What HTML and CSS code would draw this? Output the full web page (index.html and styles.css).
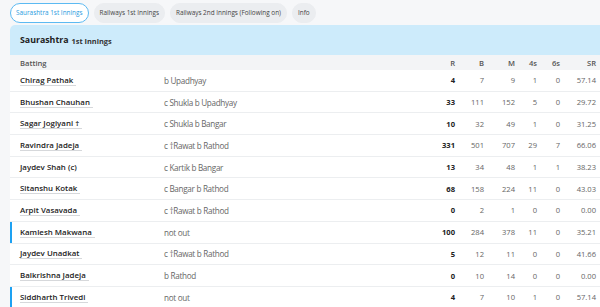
FILE: index.html
```html
<!DOCTYPE html>
<html>
<head>
<meta charset="utf-8">
<link rel="stylesheet" href="styles.css">
</head>
<body>
<div class="page">
  <nav class="tabs">
    <span class="tab active">Saurashtra 1st Innings</span>
    <span class="tab">Railways 1st Innings</span>
    <span class="tab">Railways 2nd Innings (Following on)</span>
    <span class="tab">Info</span>
  </nav>
  <section class="card">
    <header class="card-head"><span class="team">Saurashtra</span> <span class="inn">1st Innings</span></header>
    <div class="row head-row">
      <span>Batting</span><span></span><span class="num">R</span><span class="num">B</span><span class="num">M</span><span class="num">4s</span><span class="num">6s</span><span class="num">SR</span>
    </div>
    <div class="row"><span class="name"><a>Chirag Pathak</a></span><span class="dis">b Upadhyay</span><span class="num runs">4</span><span class="num">7</span><span class="num">9</span><span class="num">1</span><span class="num">0</span><span class="num">57.14</span></div>
    <div class="row"><span class="name"><a>Bhushan Chauhan</a></span><span class="dis">c Shukla b Upadhyay</span><span class="num runs">33</span><span class="num">111</span><span class="num">152</span><span class="num">5</span><span class="num">0</span><span class="num">29.72</span></div>
    <div class="row"><span class="name"><a>Sagar Jogiyani †</a></span><span class="dis">c Shukla b Bangar</span><span class="num runs">10</span><span class="num">32</span><span class="num">49</span><span class="num">1</span><span class="num">0</span><span class="num">31.25</span></div>
    <div class="row"><span class="name"><a>Ravindra Jadeja</a></span><span class="dis">c †Rawat b Rathod</span><span class="num runs">331</span><span class="num">501</span><span class="num">707</span><span class="num">29</span><span class="num">7</span><span class="num">66.06</span></div>
    <div class="row"><span class="name"><a class="plain">Jaydev Shah (c)</a></span><span class="dis">c Kartik b Bangar</span><span class="num runs">13</span><span class="num">34</span><span class="num">48</span><span class="num">1</span><span class="num">1</span><span class="num">38.23</span></div>
    <div class="row"><span class="name"><a>Sitanshu Kotak</a></span><span class="dis">c Bangar b Rathod</span><span class="num runs">68</span><span class="num">158</span><span class="num">224</span><span class="num">11</span><span class="num">0</span><span class="num">43.03</span></div>
    <div class="row"><span class="name"><a>Arpit Vasavada</a></span><span class="dis">c †Rawat b Rathod</span><span class="num runs">0</span><span class="num">2</span><span class="num">1</span><span class="num">0</span><span class="num">0</span><span class="num">0.00</span></div>
    <div class="row notout"><span class="name"><a>Kamlesh Makwana</a></span><span class="dis">not out</span><span class="num runs">100</span><span class="num">284</span><span class="num">378</span><span class="num">11</span><span class="num">0</span><span class="num">35.21</span></div>
    <div class="row"><span class="name"><a>Jaydev Unadkat</a></span><span class="dis">c †Rawat b Rathod</span><span class="num runs">5</span><span class="num">12</span><span class="num">11</span><span class="num">0</span><span class="num">0</span><span class="num">41.66</span></div>
    <div class="row"><span class="name"><a>Balkrishna Jadeja</a></span><span class="dis">b Rathod</span><span class="num runs">0</span><span class="num">10</span><span class="num">14</span><span class="num">0</span><span class="num">0</span><span class="num">0.00</span></div>
    <div class="row notout"><span class="name"><a>Siddharth Trivedi</a></span><span class="dis">not out</span><span class="num runs">4</span><span class="num">7</span><span class="num">10</span><span class="num">1</span><span class="num">0</span><span class="num">57.14</span></div>
  </section>
</div>
</body>
</html>
```

FILE: styles.css
```css
html, body {
  margin: 0;
  padding: 0;
  background: #f6f7f9;
  overflow: hidden;
}
body {
  font-family: "Open Sans", "DejaVu Sans", sans-serif;
  color: #222;
}
.page {
  padding: 3px 0 0 10px;
  width: 610px;
}
.tabs {
  display: flex;
  gap: 5px;
  height: 20px;
  align-items: center;
}
.tab {
  font-size: 6.4px;
  line-height: 18px;
  height: 18px;
  padding: 0 5px;
  border-radius: 10px;
  background: #ebedf0;
  color: #444;
  border: 1px solid #ebedf0;
  white-space: nowrap;
}
.tab.active {
  background: #fff;
  color: #2a9be0;
  border-color: #5cbaf2;
}
.card {
  margin-top: 2px;
  width: 600px;
  background: #fff;
  border-radius: 5px 5px 0 0;
  overflow: hidden;
  border-bottom: 1px solid #d8d8d8;
}
.card-head {
  height: 30px;
  background: #cdebfb;
  display: flex;
  align-items: center;
  padding-left: 10px;
  gap: 3px;
}
.team {
  font-size: 8.8px;
  font-weight: 700;
  color: #222;
}
.inn {
  font-size: 7.4px;
  font-weight: 700;
  color: #333;
  margin-top: 1px;
}
.row {
  display: grid;
  grid-template-columns: 144px 1fr 30px 29px 31px 22px 23px 36px;
  align-items: center;
  height: 21.7px;
  padding: 0 14px 0 10px;
  font-size: 7.6px;
  color: #666;
  border-bottom: 1px solid #eceef0;
  box-sizing: border-box;
  position: relative;
}
.head-row {
  height: 15px;
  background: #f3f4f6;
  font-weight: 600;
  color: #555;
  border-bottom: none;
}
.name a {
  font-size: 7.9px;
  font-weight: 600;
  color: #222;
  border-bottom: 1px solid #d6d8db;
  padding-right: 3px;
  line-height: 10px;
  display: inline-block;
}
.name a.plain {
  border-bottom-color: transparent;
}
.dis {
  color: #666;
  font-size: 8.15px;
  letter-spacing: -0.3px;
}
.num {
  text-align: right;
}
.runs {
  font-weight: 700;
  color: #222;
}
.notout {
  box-shadow: inset 2px 0 0 #1da1f2;
}
```
